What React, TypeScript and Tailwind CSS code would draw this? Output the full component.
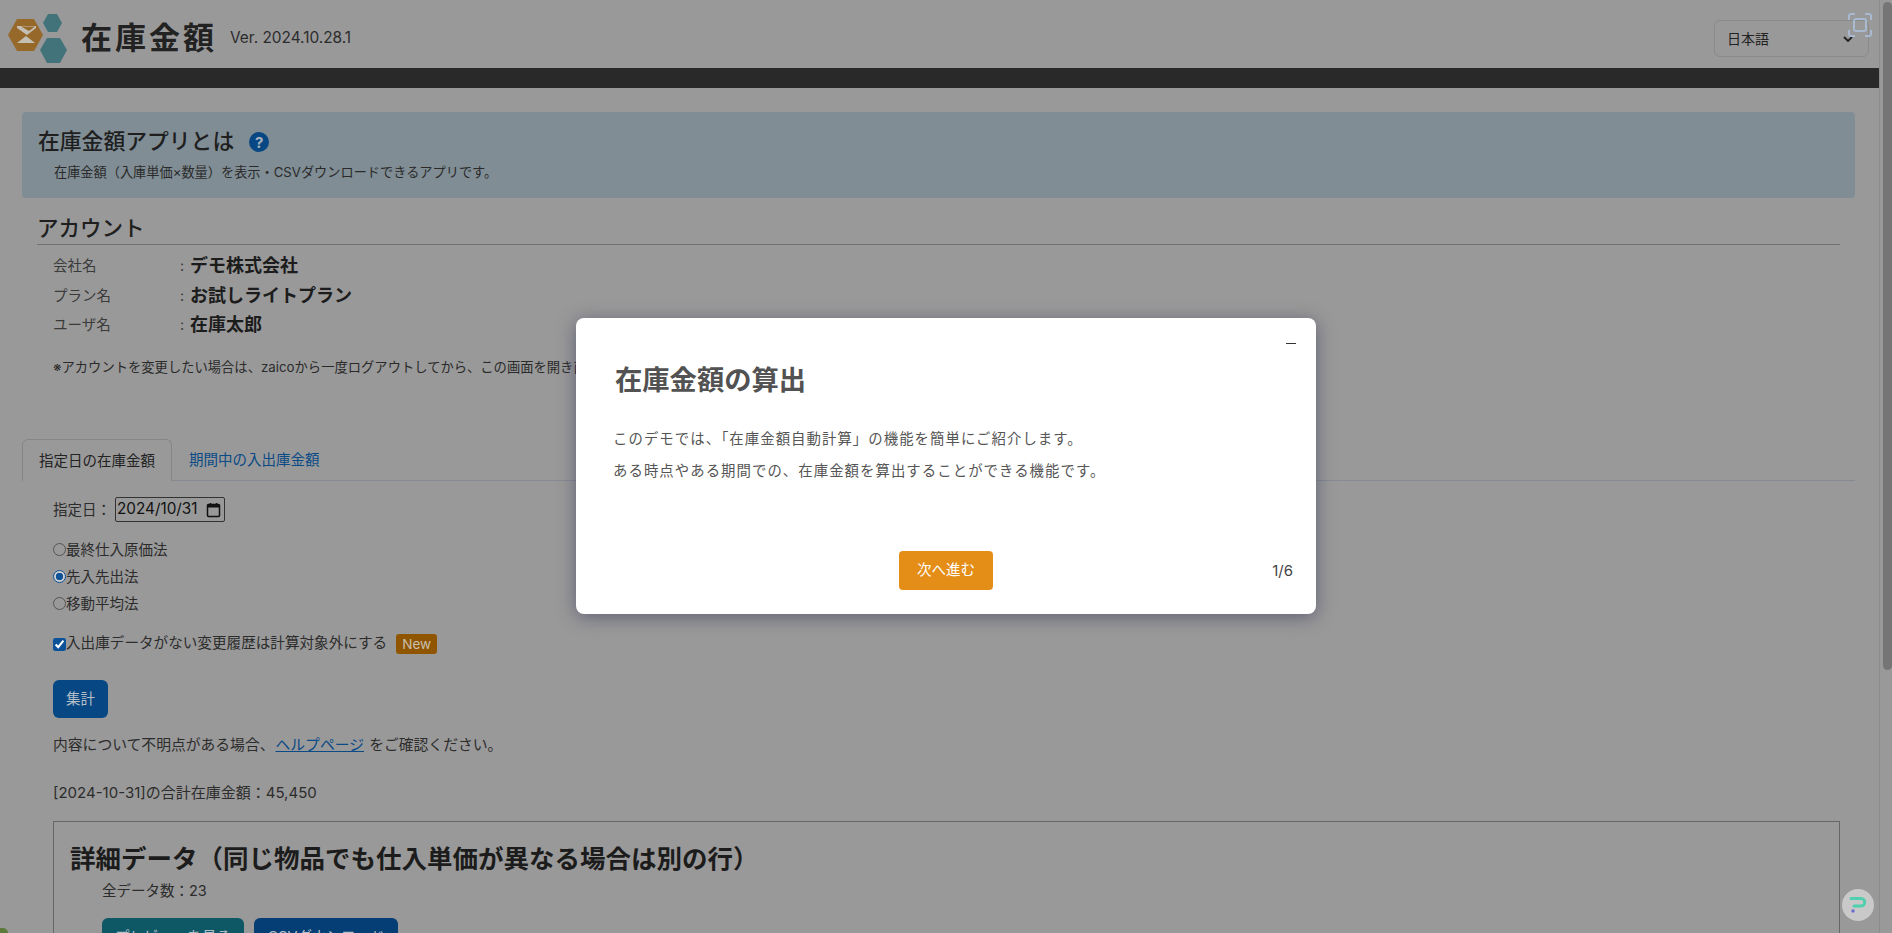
function Logo() {
  return (
    <svg width="60" height="50" viewBox="0 0 60 50" className="shrink-0">
      <polygon points="0,21 9,5 26,5 35,21 26,37 9,37" fill="#966829" />
      <polygon points="9,12 28,12 28,14 19,21 9,14" fill="#c4bfb4" />
      <polygon points="13,12.5 27,12.5 21,17" fill="#966829" />
      <polygon points="9,29 18,22 27,29" fill="#c4bfb4" />
      <polygon points="35,9 40,0 49,0 54,9 49,18 40,18" fill="#42737b" />
      <polygon points="32,36 39,24 52,24 59,36 52,49 39,49" fill="#42737b" />
    </svg>
  );
}

function AccountRow({ label, value }: { label: string; value: string }) {
  return (
    <div className="flex h-[29.7px] items-center">
      <span className="w-[127px] text-[14.5px] text-[#3a3a3a]">{label}</span>
      <span className="w-[10px] text-[14.5px] text-[#3a3a3a]">:</span>
      <span className="text-[18px] font-bold leading-none text-[#1c1c1c]">{value}</span>
    </div>
  );
}

function Radio({ label, checked }: { label: string; checked?: boolean }) {
  return (
    <label className="flex h-[27px] items-center text-[14.5px] text-[#2c2c2c]">
      <input
        type="radio"
        name="method"
        defaultChecked={checked}
        className={
          checked
            ? "h-[13px] w-[13px] appearance-none rounded-full border border-[#0f5298] bg-[radial-gradient(circle,#0f5298_45%,#ffffff80_50%)]"
            : "h-[13px] w-[13px] appearance-none rounded-full border border-[#555555]"
        }
      />
      {label}
    </label>
  );
}

export default function App() {
  return (
    <div className="relative flex h-[933px] overflow-hidden bg-[#999999] font-['Inter','Noto_Sans_CJK_JP',sans-serif] text-[#2c2c2c]">
      <div className="min-w-0 flex-1">
        {/* header */}
        <header className="flex h-[68px] items-start">
          <div className="ml-[8px] mt-[14px]">
            <Logo />
          </div>
          <h1 className="ml-[13px] mt-[19px] whitespace-nowrap text-[31px] font-bold leading-[38px] tracking-[3px] text-[#222222]">
            在庫金額
          </h1>
          <span className="ml-[13px] mt-[27px] text-[15.4px] leading-[22px] text-[#2c2c2c]">Ver. 2024.10.28.1</span>
          <div className="relative ml-auto mr-[10px] mt-[20px] w-[155px]">
            <select className="h-[37px] w-full appearance-none rounded-[6px] border border-[#8a8a8a] bg-transparent pl-[12px] text-[14px] text-[#222222]">
              <option>日本語</option>
            </select>
            <svg className="pointer-events-none absolute right-[16px] top-[16px]" width="10" height="7" viewBox="0 0 10 7" fill="none" stroke="#222222" strokeWidth="1.8">
              <path d="M1 1l4 4 4-4" />
            </svg>
          </div>
        </header>
        <div className="h-[20px] bg-[#292929]" />

        <main className="pl-[22px] pr-[24px] pt-[24px]">
          {/* about */}
          <section className="h-[86px] rounded-[4px] bg-[#808d94] pl-[16px] pt-[17px]">
            <div className="flex h-[26px] items-center">
              <h2 className="text-[21.8px] font-medium leading-none text-[#1f1f1f]">在庫金額アプリとは</h2>
              <span className="ml-[15px] flex h-[20px] w-[20px] items-center justify-center rounded-full bg-[#074884] text-[15px] font-bold leading-none text-[#a8b4bb]">
                ?
              </span>
            </div>
            <p className="ml-[16px] mt-[7px] text-[13.2px] leading-[20px] text-[#2a2a2a]">
              在庫金額（入庫単価×数量）を表示・CSVダウンロードできるアプリです。
            </p>
          </section>

          {/* account */}
          <section className="mr-[15px] mt-[16px] pl-[15px]">
            <h2 className="border-b border-[#707070] pb-[1px] text-[21.5px] font-medium leading-[29px] text-[#1f1f1f]">アカウント</h2>
            <div className="mt-[6px] pl-[16px]">
              <AccountRow label="会社名" value="デモ株式会社" />
              <AccountRow label="プラン名" value="お試しライトプラン" />
              <AccountRow label="ユーザ名" value="在庫太郎" />
              <p className="mt-[17px] whitespace-nowrap text-[13.3px] leading-[20px] text-[#2a2a2a]">
                ※アカウントを変更したい場合は、zaicoから一度ログアウトしてから、この画面を開き直してください。
              </p>
            </div>
          </section>

          {/* tabs */}
          <nav className="mt-[62px] flex h-[42px] border-b border-[#868b92]">
            <div className="flex h-[42px] w-[150px] items-center justify-center rounded-t-[6px] border border-b-0 border-[#868686] bg-[#999999] text-[14.5px] text-[#222222]">
              指定日の在庫金額
            </div>
            <div className="flex h-[41px] items-center pl-[17px] text-[14.5px] text-[#0a4a86]">期間中の入出庫金額</div>
          </nav>

          <div className="pl-[31px]">
            <div className="mt-[16px] flex h-[25px] items-center text-[14.5px]">
              <span className="w-[62px]">指定日：</span>
              <label className="flex h-[25px] w-[110px] items-center justify-between rounded-[2px] border border-[#333333] pl-[1px] pr-[3px]">
                <input type="text" defaultValue="2024/10/31" className="w-[88px] bg-transparent text-[15.3px] text-[#111111] outline-none" />
                <svg width="15" height="16" viewBox="0 0 15 16" fill="none">
                  <rect x="1.5" y="2.5" width="12" height="12" rx="1" stroke="#111111" strokeWidth="1.5" />
                  <rect x="1.5" y="2.5" width="12" height="3" fill="#111111" />
                  <path d="M4.5 1v2M10.5 1v2" stroke="#111111" strokeWidth="1.5" />
                </svg>
              </label>
            </div>

            <div className="mt-[14px]">
              <Radio label="最終仕入原価法" />
              <Radio label="先入先出法" checked />
              <Radio label="移動平均法" />
            </div>

            <label className="mt-[15px] flex h-[24px] items-center whitespace-nowrap text-[14.6px] text-[#2c2c2c]">
              <input type="checkbox" defaultChecked className="h-[13px] w-[13px] accent-[#0d5299]" />
              入出庫データがない変更履歴は計算対象外にする
              <span className="ml-[9px] rounded-[3px] bg-[#8f5500] px-[6px] text-[13.5px] leading-[20px] text-[#c9c0b0]">New</span>
            </label>

            <button className="mt-[24px] block h-[38px] w-[55px] rounded-[6px] bg-[#074884] text-[14.5px] text-[#b5bfc8]">集計</button>

            <p className="mt-[17px] whitespace-nowrap text-[14.8px] leading-[20px] text-[#2c2c2c]">
              内容について不明点がある場合、
              <a className="mx-[1px] text-[#0a4a86] underline">ヘルプページ</a> をご確認ください。
            </p>

            <p className="mt-[28px] text-[15px] leading-[20px] text-[#2c2c2c]">[2024-10-31]の合計在庫金額：45,450</p>

            {/* detail box */}
            <section className="mr-[15px] mt-[18px] h-[200px] border border-[#666666] pl-[16px] pt-[21px]">
              <h2 className="whitespace-nowrap text-[25.5px] font-bold leading-[32px] text-[#1c1c1c]">
                詳細データ（同じ物品でも仕入単価が異なる場合は別の行）
              </h2>
              <div className="pl-[32px]">
                <p className="mt-[6px] text-[14.5px] leading-[20px]">全データ数：23</p>
                <div className="mt-[17px] flex gap-[10px]">
                  <button className="h-[38px] w-[142px] rounded-[6px] bg-[#0e5866] text-[14.5px] text-[#b5bfc8]">プレビューを見る</button>
                  <button className="h-[38px] w-[144px] rounded-[6px] bg-[#043e74] text-[14.5px] text-[#b5bfc8]">CSVダウンロード</button>
                </div>
              </div>
            </section>
          </div>
        </main>
      </div>

      {/* browser scrollbar */}
      <div className="w-[13px] shrink-0 border-l border-[#8c8c8c] pl-[3px] pt-[2px]">
        <div className="h-[668px] w-[9px] rounded-full bg-[#757575]" />
      </div>

      {/* capture widget */}
      <svg className="absolute left-[1848px] top-[13px]" width="24" height="24" viewBox="0 0 24 24" fill="none" stroke="#a9b9cf" strokeWidth="2">
        <path d="M1 7V3a2 2 0 0 1 2-2h4M17 1h4a2 2 0 0 1 2 2v4M23 17v4a2 2 0 0 1-2 2h-4M7 23H3a2 2 0 0 1-2-2v-4" />
        <rect x="6" y="6" width="12" height="12" rx="2" />
      </svg>

      {/* help widget */}
      <div className="absolute left-[1842px] top-[889px] flex h-[32px] w-[32px] items-center justify-center rounded-full bg-[#c9c9c9]">
        <svg width="20" height="20" viewBox="0 0 20 20" fill="none">
          <path d="M3 3.5h10a3.5 3.5 0 0 1 0 7.5H6" stroke="#4fd0ae" strokeWidth="3" strokeLinecap="round" />
          <circle cx="5" cy="16" r="1.7" fill="#6a6ad0" />
        </svg>
      </div>

      {/* corner of something behind the page */}
      <div className="absolute bottom-0 left-0 h-[5px] w-[8px] rounded-tr-full bg-[#5c7a3a]" />

      {/* tutorial modal */}
      <div className="absolute inset-0 flex items-center justify-center">
        <div className="relative mt-[-2px] h-[296px] w-[740px] rounded-[8px] bg-white px-[39px] shadow-[0_3px_18px_rgba(50,50,90,0.55)]">
          <div className="absolute right-[20px] top-[25px] h-[1.5px] w-[10px] bg-[#333333]" />
          <h2 className="mt-[46px] text-[27.3px] font-bold leading-[34px] text-[#525252]">在庫金額の算出</h2>
          <div className="-ml-[2px] mt-[25px] text-[14.4px] tracking-[1.05px] text-[#555555]">
            <p className="h-[32px] leading-[32px]">このデモでは、「在庫金額自動計算」の機能を簡単にご紹介します。</p>
            <p className="h-[32px] leading-[32px]">ある時点やある期間での、在庫金額を算出することができる機能です。</p>
          </div>
          <div className="absolute inset-x-0 bottom-[24px] flex justify-center">
            <button className="h-[39px] w-[94px] rounded-[4px] bg-[#e48e18] text-[14.5px] text-white">次へ進む</button>
          </div>
          <span className="absolute bottom-[33px] right-[23px] text-[15px] leading-[20px] text-[#444444]">1/6</span>
        </div>
      </div>
    </div>
  );
}
